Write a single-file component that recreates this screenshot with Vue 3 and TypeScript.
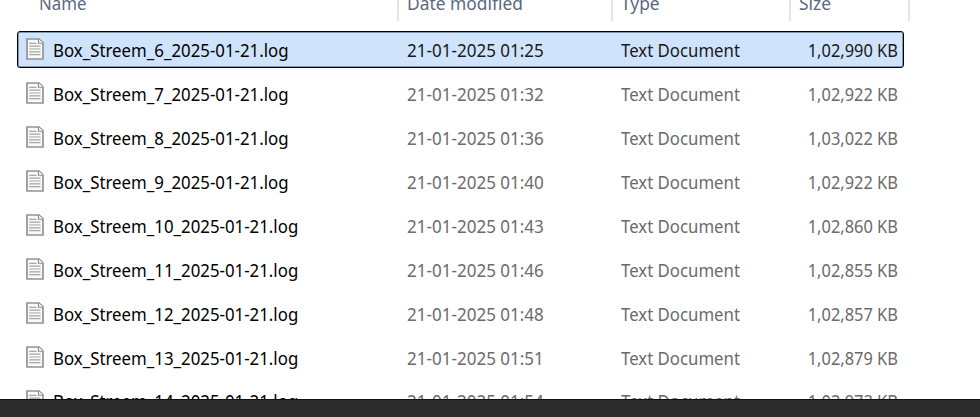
<script setup lang="ts">
import { ref } from 'vue'

interface LogFile {
  name: string
  modified: string
  size: string
}

const type = 'Text Document'

const files: LogFile[] = [
  { name: 'Box_Streem_6_2025-01-21.log', modified: '21-01-2025 01:25', size: '1,02,990 KB' },
  { name: 'Box_Streem_7_2025-01-21.log', modified: '21-01-2025 01:32', size: '1,02,922 KB' },
  { name: 'Box_Streem_8_2025-01-21.log', modified: '21-01-2025 01:36', size: '1,03,022 KB' },
  { name: 'Box_Streem_9_2025-01-21.log', modified: '21-01-2025 01:40', size: '1,02,922 KB' },
  { name: 'Box_Streem_10_2025-01-21.log', modified: '21-01-2025 01:43', size: '1,02,860 KB' },
  { name: 'Box_Streem_11_2025-01-21.log', modified: '21-01-2025 01:46', size: '1,02,855 KB' },
  { name: 'Box_Streem_12_2025-01-21.log', modified: '21-01-2025 01:48', size: '1,02,857 KB' },
  { name: 'Box_Streem_13_2025-01-21.log', modified: '21-01-2025 01:51', size: '1,02,879 KB' },
  { name: 'Box_Streem_14_2025-01-21.log', modified: '21-01-2025 01:54', size: '1,02,973 KB' },
]

const selected = ref(0)
</script>

<template>
  <div class="explorer">
    <div class="header">
      <div class="col col-name"><span class="text">Name</span></div>
      <div class="col"><span class="text">Date modified</span></div>
      <div class="col"><span class="text">Type</span></div>
      <div class="col"><span class="text">Size</span></div>
    </div>

    <div class="list">
      <div
        v-for="(file, i) in files"
        :key="file.name"
        class="row"
        :class="{ selected: i === selected }"
        @click="selected = i"
      >
        <svg class="icon" viewBox="0 0 18 23" preserveAspectRatio="none">
          <path d="M1 1H13L17 5V22H1Z" fill="#fafafa" stroke="#929292" stroke-width="1.7" />
          <path d="M12.5 1V5.5H17" fill="#fff" stroke="#8a8a8a" stroke-width="1.2" />
          <path
            d="M3.2 5.5H10.5M3.2 8.5H14.5M3.2 11.5H14.5M3.2 14.5H14.5M3.2 17.5H14.5"
            stroke="#a3a3a3"
            stroke-width="1.3"
          />
        </svg>
        <div class="cell name"><span class="text">{{ file.name }}</span></div>
        <div class="cell modified"><span class="text">{{ file.modified }}</span></div>
        <div class="cell type"><span class="text">{{ type }}</span></div>
        <div class="cell size"><span class="text">{{ file.size }}</span></div>
      </div>
    </div>

    <div class="bottom-bar"></div>
  </div>
</template>

<style>
body {
  margin: 0;
}
</style>

<style scoped>
.explorer {
  display: flex;
  flex-direction: column;
  width: 980px;
  height: 417px;
  overflow: hidden;
  background: #fff;
  font-family: 'Noto Sans', 'Open Sans', sans-serif;
  font-size: 18px;
  line-height: 24px;
  white-space: nowrap;
}

/* narrows the glyphs without touching their height */
.text {
  display: inline-block;
  transform: scaleX(0.965);
  transform-origin: left;
}

.header {
  display: grid;
  grid-template-columns: 360px 214px 178px 119px;
  flex: none;
  height: 21px;
  padding-left: 39px;
  color: #5b6880;
}

.col {
  box-sizing: border-box;
  height: 21px;
  padding-left: 8px;
  border-right: 2px solid #e5e5e5;
  line-height: 6px;
}

.col-name {
  padding-left: 0;
}

.col-name .text {
  transform: scaleX(0.935);
}

.list {
  flex: 1;
  min-height: 0;
  padding: 10px 0 0 17px;
  overflow: hidden;
}

.row {
  display: grid;
  grid-template-columns: 34px 354.4px 213.6px 150px 127.2px;
  align-items: center;
  box-sizing: border-box;
  width: 887px;
  height: 37px;
  margin-bottom: 6.95px;
  padding-left: 1.6px;
  color: #6b6b6b;
}

.row.selected {
  margin-bottom: 7.4px;
  padding-left: 0.6px;
  border: 1px solid #000;
  border-radius: 3px;
  background: #cfe4fc;
  box-shadow: inset 0 0 0 1px #8798ab;
  color: #191919;
}

.icon {
  width: 18px;
  height: 22px;
  margin-left: 7px;
  margin-bottom: 1.5px;
}

.name {
  color: #000;
}

.name .text {
  transform: scaleX(0.935);
}

.modified .text {
  transform: scaleX(0.946);
}

.type .text {
  transform: scaleX(0.932);
}

.size {
  text-align: right;
}

.size .text {
  transform: scaleX(0.912);
  transform-origin: right;
}

.bottom-bar {
  box-sizing: border-box;
  flex: none;
  height: 18px;
  border-top: 1px solid #111;
  background: #2b2b2b;
}
</style>
